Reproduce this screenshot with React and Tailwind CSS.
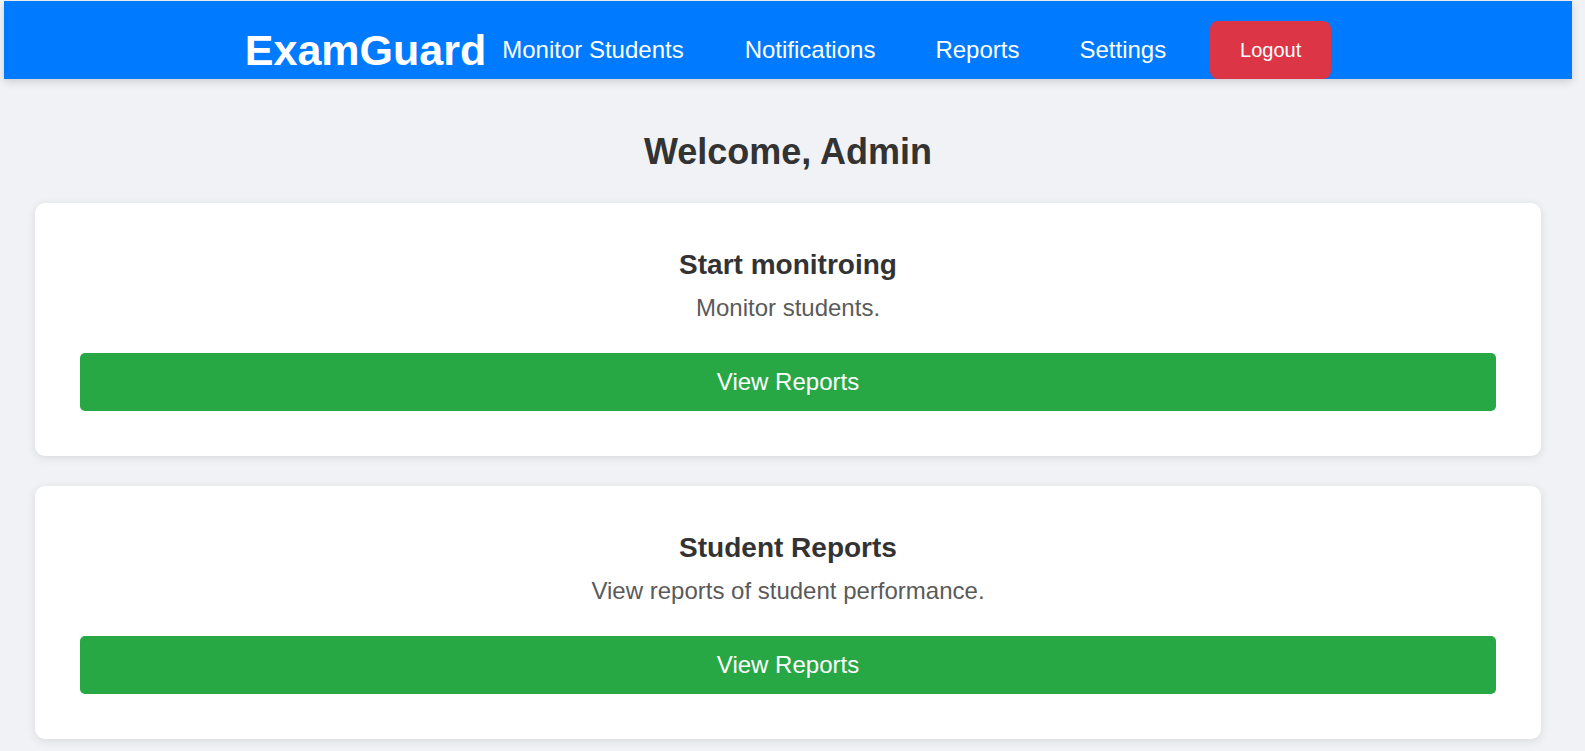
import React from 'react';

const navLinks = [
    { label: 'Monitor Students', className: 'ml-[16px]' },
    { label: 'Notifications', className: 'ml-[61px]' },
    { label: 'Reports', className: 'ml-[60px]' },
    { label: 'Settings', className: 'ml-[60px]' },
];

const cards = [
    { title: 'Start monitroing', text: 'Monitor students.' },
    { title: 'Student Reports', text: 'View reports of student performance.' },
];

const DashboardCard = ({ title, text }) => (
    <div className="bg-white rounded-[10px] shadow-[0_2px_10px_rgba(0,0,0,0.1)] px-[45px] pt-[45px] pb-[45px] text-center">
        <h2 className="text-[28px] leading-[34px] font-bold text-[#333]">{title}</h2>
        <p className="mt-[12px] text-[24px] leading-[28px] text-[#5a5a5a]">{text}</p>
        <button className="mt-[31px] w-full h-[58px] bg-[#28a745] text-white text-[24px] rounded-[5px]">
            View Reports
        </button>
    </div>
);

const App = () => {
    return (
        <div className="min-h-screen bg-[#f0f2f5] pt-[1px] pl-[4px] pr-[13px]" style={{ fontFamily: '"Liberation Sans", Arial, sans-serif' }}>
            <nav className="h-[78px] bg-[#007bff] shadow-[0_3px_8px_rgba(0,0,0,0.15)] flex items-end justify-center text-white">
                <div className="flex items-center h-[58px]">
                    <span className="text-[43px] leading-[50px] font-bold">ExamGuard</span>
                    {navLinks.map(link => (
                        <a key={link.label} className={`${link.className} text-[24px] leading-[28px]`}>{link.label}</a>
                    ))}
                    <button className="ml-[44px] h-[58px] w-[121px] bg-[#dc3545] rounded-[8px] text-[20px]">Logout</button>
                </div>
            </nav>

            <main className="px-[31px]">
                <h1 className="mt-[52px] text-[36px] leading-[42px] font-bold text-[#333] text-center">Welcome, Admin</h1>
                <div className="mt-[30px] flex flex-col gap-[30px] pb-[30px]">
                    {cards.map(card => (
                        <DashboardCard key={card.title} {...card} />
                    ))}
                </div>
            </main>
        </div>
    );
};

export default App;
